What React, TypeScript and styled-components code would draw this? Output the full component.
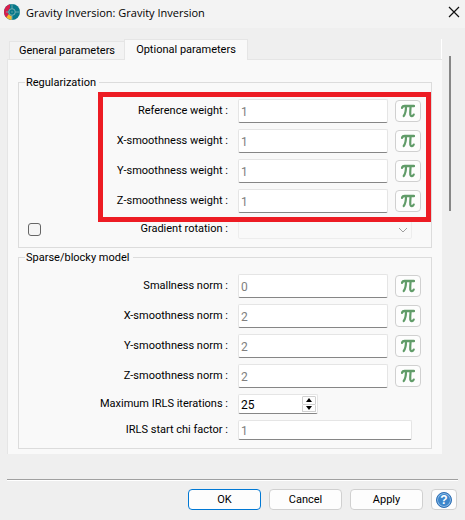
import React, { useState } from "react";
import styled, { createGlobalStyle, css } from "styled-components";

const GlobalStyle = createGlobalStyle`
  * { box-sizing: border-box; }
  body {
    margin: 0;
    background: #efefef;
    color: #000;
    font: 11px/14px Roboto, "Noto Sans", sans-serif;
  }
  button, input, select { font: inherit; color: inherit; margin: 0; }
`;

const Dialog = styled.main`
  min-height: 100vh;
  display: flex;
  flex-direction: column;
`;

const TitleBar = styled.header`
  height: 28px;
  padding: 0 5px 4px 4px;
  display: flex;
  align-items: center;
  gap: 6px;
  background: #f3f3f3;
`;

const Title = styled.h1`
  flex: 1;
  margin: 0;
  padding-top: 2px;
  font: 400 11px/16px "Open Sans", "Noto Sans", sans-serif;
`;

const CloseButton = styled.button`
  display: flex;
  padding: 0;
  border: 0;
  background: none;
`;

const Body = styled.div`
  flex: 1;
  display: flex;
  padding: 11px 14px 0 7px;
`;

const Pages = styled.div`
  flex: 1;
  min-width: 0;
`;

const TabList = styled.div`
  display: flex;
  align-items: flex-end;
  height: 20px;
  padding-left: 2px;
  border-right: 1px solid #fff;
`;

const Tab = styled.button<{ $active?: boolean }>`
  position: relative;
  height: 18px;
  width: 115px;
  padding: 0;
  border: 1px solid #e5e5e5;
  border-width: 1px 0 0 1px;
  background: #f3f3f3;
  white-space: nowrap;
  ${(p) =>
    p.$active &&
    css`
      width: 124px;
      height: 21px;
      margin-bottom: -1px;
      border-right-width: 1px;
      background: #f9f9f9;
    `}
`;

const Panel = styled.section`
  padding: 15px 10px 5px 10px;
  border: 1px solid #e5e5e5;
  border-width: 1px 0 0 1px;
  background: #f9f9f9;
`;

const ScrollThumb = styled.div`
  width: 2px;
  height: 155px;
  margin: 17px 0 0 7px;
  background: #868686;
`;

const Group = styled.fieldset`
  position: relative;
  min-width: 0;
  margin: 0;
  padding: 10px 10px 8px 9px;
  border: 1px solid #dcdcdc;
  & + & { margin-top: 2px; }
`;

const Legend = styled.legend`
  margin-left: -3px;
  padding: 0 3px 0 1px;
  height: 14px;
  line-height: 16px;
`;

const Rows = styled.div`
  display: grid;
  gap: 6px;
`;

const Row = styled.div<{ $short?: boolean }>`
  display: grid;
  grid-template-columns: 13px 177px minmax(0, 1fr);
  column-gap: 10px;
  align-items: center;
  height: ${(p) => (p.$short ? 20 : 24)}px;
`;

const Label = styled.label`
  grid-column: 2;
  text-align: right;
  white-space: nowrap;
`;

const Field = styled.div`
  grid-column: 3;
  display: flex;
  align-items: center;
  gap: 7px;
  height: 100%;
`;

const fieldBox = css`
  border: 1px solid #e5e5e5;
  border-bottom-color: #868686;
  border-radius: 2px;
  background: #fff;
`;

const TextBox = styled.input<{ $wide?: boolean }>`
  ${fieldBox}
  flex: 1;
  min-width: 0;
  height: 100%;
  padding: 2px 2px 0;
  margin-right: ${(p) => (p.$wide ? 9 : 0)}px;
  font-size: 12px;
  color: #808080;
`;

const PiButton = styled.button`
  display: flex;
  align-items: center;
  justify-content: center;
  width: 26px;
  height: 22px;
  padding: 0 0 1px;
  border: 1px solid #d0d0d0;
  border-radius: 4px;
  background: #fdfdfd;
`;

const CheckBox = styled.input`
  appearance: none;
  grid-column: 1;
  width: 13px;
  height: 13px;
  border: 1px solid #666;
  border-radius: 3px;
  background: #f5f5f5;
  &:checked { background: #0078d4; }
`;

const ComboWrap = styled.div`
  position: relative;
  flex: 1;
  height: 100%;
  margin-right: 9px;
  svg {
    position: absolute;
    right: 4px;
    top: 8px;
    pointer-events: none;
  }
`;

const Combo = styled.select`
  appearance: none;
  width: 100%;
  height: 100%;
  border: 1px solid #e9e9e9;
  border-radius: 2px;
  background: #f9f9f9;
`;

const Spin = styled.div`
  ${fieldBox}
  display: flex;
  width: 80px;
  height: 100%;
  padding-right: 1px;
`;

const SpinInput = styled.input`
  appearance: textfield;
  flex: 1;
  min-width: 0;
  padding: 2px 2px 0;
  border: 0;
  background: none;
  font-size: 12px;
  &::-webkit-inner-spin-button { appearance: none; }
`;

const SpinButtons = styled.div`
  display: grid;
  width: 14px;
  padding: 1px 0;
`;

const SpinButton = styled.button`
  display: flex;
  align-items: center;
  justify-content: center;
  padding: 0;
  border: 1px solid #d0d0d0;
  border-radius: 1px;
  background: #fdfdfd;
  & + & { border-top: 0; }
`;

const Highlight = styled.div`
  position: absolute;
  inset: 3px 0 25px 79px;
  border: 5px solid #ed1c24;
  pointer-events: none;
`;

const Footer = styled.footer`
  display: flex;
  justify-content: flex-end;
  gap: 8px;
  margin: 0 7px;
  padding: 9px 1px 10px;
  border-top: 1px solid #a0a0a0;
  box-shadow: inset 0 1px #fff;
`;

const ActionButton = styled.button<{ $primary?: boolean }>`
  width: 73px;
  height: 21px;
  padding: 0;
  border: 1px solid ${(p) => (p.$primary ? "#0078d4" : "#d0d0d0")};
  border-radius: 4px;
  background: #fdfdfd;
`;

const HelpButton = styled(ActionButton)`
  display: flex;
  align-items: center;
  justify-content: center;
  width: 26px;
`;

const HelpMark = styled.span`
  width: 16px;
  height: 16px;
  border: 1px solid #2f6fb4;
  border-radius: 50%;
  background: #3d86cb;
  box-shadow: inset 0 0 0 1px #8dbbe6;
  color: #fff;
  font: bold 12px/14px "Liberation Sans", sans-serif;
`;

const Logo = () => (
  <svg width="16" height="16" viewBox="0 0 16 16" aria-hidden="true">
    <circle cx="8" cy="8" r="8" fill="#08798a" />
    <path d="M6 0.3A8 8 0 0 0 2.2 13.5L5 10.7A4 4 0 0 1 4.6 6L6 4Z" fill="#d91f4c" />
    <path d="M2.2 13.5A8 8 0 0 0 8 16V12A4 4 0 0 1 4.7 10.2Z" fill="#fbb829" />
    <path d="M8 0V4.6M11.4 8H16M8 11.4V16M4.6 8H2" stroke="#64a9af" />
    <circle cx="8" cy="8" r="3.3" fill="#08798a" stroke="#7db1b2" />
    <circle cx="8" cy="8" r="1" fill="#3d929d" />
  </svg>
);

const ExpressionIcon = () => (
  <svg width="14" height="14" viewBox="0 0 14 14" fill="none" stroke="#619c69" strokeLinecap="round" aria-hidden="true">
    <path d="M1 3.8C1.4 2.2 2.2 2 3.6 2H13" strokeWidth="2.4" />
    <path d="M5 2.5C5 7 4.6 9.5 2.7 12" strokeWidth="2.2" />
    <path d="M9.6 2.5C9.3 6.5 9 9.5 9.4 11C9.9 12.8 12 12.4 12.7 10.6" strokeWidth="2.2" />
  </svg>
);

type ItemProps = { id: string; label: string; value: string; pi?: boolean };

const Item = ({ id, label, value, pi = true }: ItemProps) => {
  const [text, setText] = useState(value);
  return (
    <Row $short={!pi}>
      <Label htmlFor={id}>{label} :</Label>
      <Field>
        <TextBox id={id} $wide={!pi} value={text} onChange={(e) => setText(e.target.value)} />
        {pi && (
          <PiButton type="button" aria-label={`${label} expression`}>
            <ExpressionIcon />
          </PiButton>
        )}
      </Field>
    </Row>
  );
};

const weights = ["Reference weight", "X-smoothness weight", "Y-smoothness weight", "Z-smoothness weight"];
const norms = [
  ["Smallness norm", "0"],
  ["X-smoothness norm", "2"],
  ["Y-smoothness norm", "2"],
  ["Z-smoothness norm", "2"],
];

export default function App() {
  const [iterations, setIterations] = useState(25);
  return (
    <Dialog>
      <GlobalStyle />
      <TitleBar>
        <Logo />
        <Title>Gravity Inversion: Gravity Inversion</Title>
        <CloseButton type="button" aria-label="Close">
          <svg width="12" height="12" viewBox="0 0 12 12" stroke="#111" strokeWidth="1.2">
            <path d="M1 1L11 11M11 1L1 11" />
          </svg>
        </CloseButton>
      </TitleBar>
      <Body>
        <Pages>
          <TabList role="tablist">
            <Tab type="button" role="tab" aria-selected={false}>General parameters</Tab>
            <Tab type="button" role="tab" aria-selected $active>Optional parameters</Tab>
          </TabList>
          <Panel role="tabpanel">
            <Group>
              <Legend>Regularization</Legend>
              <Rows>
                {weights.map((w) => (
                  <Item key={w} id={w.replace(" ", "-")} label={w} value="1" />
                ))}
                <Row $short>
                  <CheckBox type="checkbox" aria-label="Use gradient rotation" />
                  <Label htmlFor="rotation">Gradient rotation :</Label>
                  <Field>
                    <ComboWrap>
                      <Combo id="rotation" disabled />
                      <svg width="10" height="6" viewBox="0 0 10 6" fill="none" stroke="#a0a0a0">
                        <path d="M1 1L5 5L9 1" />
                      </svg>
                    </ComboWrap>
                  </Field>
                </Row>
              </Rows>
              <Highlight />
            </Group>
            <Group>
              <Legend>Sparse/blocky model</Legend>
              <Rows>
                {norms.map(([label, value]) => (
                  <Item key={label} id={label.replace(" ", "-")} label={label} value={value} />
                ))}
                <Row $short>
                  <Label htmlFor="iterations">Maximum IRLS iterations :</Label>
                  <Field>
                    <Spin>
                      <SpinInput
                        id="iterations"
                        type="number"
                        value={iterations}
                        onChange={(e) => setIterations(Number(e.target.value))}
                      />
                      <SpinButtons>
                        <SpinButton type="button" aria-label="Increase" onClick={() => setIterations(iterations + 1)}>
                          <svg width="6" height="4" viewBox="0 0 6 4"><path d="M0 4L3 0L6 4Z" /></svg>
                        </SpinButton>
                        <SpinButton type="button" aria-label="Decrease" onClick={() => setIterations(iterations - 1)}>
                          <svg width="6" height="4" viewBox="0 0 6 4"><path d="M0 0L3 4L6 0Z" /></svg>
                        </SpinButton>
                      </SpinButtons>
                    </Spin>
                  </Field>
                </Row>
                <Item id="chi" label="IRLS start chi factor" value="1" pi={false} />
              </Rows>
            </Group>
          </Panel>
        </Pages>
        <ScrollThumb />
      </Body>
      <Footer>
        <ActionButton type="button" $primary>OK</ActionButton>
        <ActionButton type="button">Cancel</ActionButton>
        <ActionButton type="button">Apply</ActionButton>
        <HelpButton type="button" aria-label="Help"><HelpMark>?</HelpMark></HelpButton>
      </Footer>
    </Dialog>
  );
}
